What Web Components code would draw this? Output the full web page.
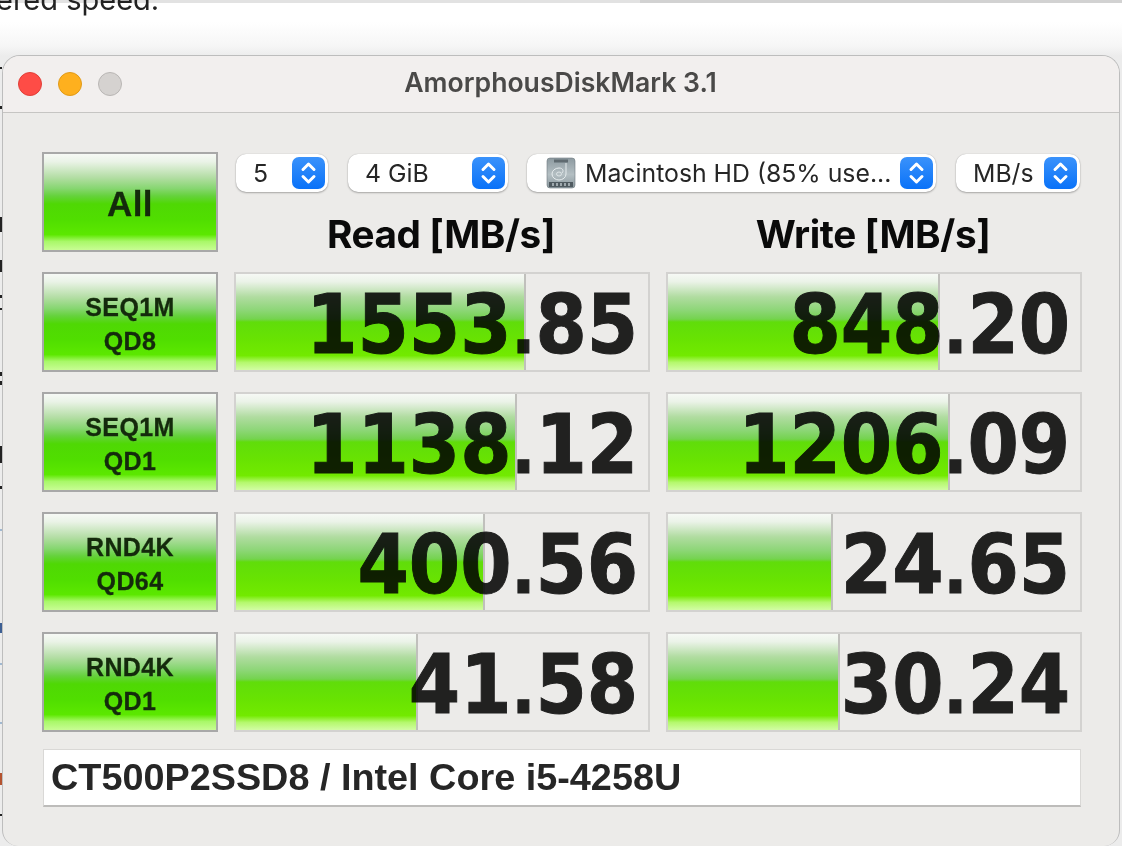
<!DOCTYPE html>
<html>
<head>
<meta charset="utf-8">
<title>AmorphousDiskMark</title>
<style>
  html, body { margin: 0; height: 100%; overflow: hidden; background: #fff; }
</style>
</head>
<body>
<desktop-bg>
  <disk-window>
    <mark-panel></mark-panel>
  </disk-window>
</desktop-bg>

<script>
const GLOSS = `linear-gradient(180deg,
  #f6f9f5 0%, #eaf3e7 8%, #b5dea6 24%, #86d670 36%, #64d23a 44%, #4fd804 52%, #50de00 68%, #5ce800 84%, #a8f868 91%, #c8fc94 100%)`
const GLOSS_BAR = `linear-gradient(180deg,
  #f6f9f5 0%, #ebf3e8 8%, #b0dca0 24%, #8cd676 38%, #74d34e 47%, #60dd0a 50%, #68e302 68%, #72ea00 85%, #b4f86c 92%, #d2fca4 100%)`

class DesktopBg extends HTMLElement {
  constructor() {
    super()
    this.attachShadow({ mode: 'open' })
    this.shadowRoot.innerHTML = `
    <style>
      :host { display: block; position: relative; width: 1122px; height: 846px; overflow: hidden;
        background: linear-gradient(180deg, #fff 0, #fff 22px, #f6f6f6 46px, #ececec 56px);
        font-family: "Inter", "Liberation Sans", sans-serif; color: #222; }
      .strip { position: absolute; left: 0; right: 0; top: 0; height: 3px;
        background: linear-gradient(90deg, #e2e2e2 640px, #d2d2d2 640px); }
      .line { position: absolute; left: -4px; top: -15px; font-size: 29px; line-height: 30px; white-space: nowrap; }
      .bits { position: absolute; left: 0; top: 0; width: 3px; height: 846px; }
      .bits b { position: absolute; left: 0; width: 2px; background: #222; }
    </style>
    <div class="strip"></div>
    <div class="line">ered speed.</div>
    <div class="bits">
      <b style="top:67px;height:2px"></b><b style="top:106px;height:3px"></b>
      <b style="top:217px;height:15px"></b><b style="top:260px;height:12px"></b>
      <b style="top:295px;height:3px"></b><b style="top:308px;height:2px"></b>
      <b style="top:372px;height:4px"></b><b style="top:381px;height:4px"></b>
      <b style="top:446px;height:17px"></b><b style="top:486px;height:3px"></b>
      <b style="top:529px;height:2px;background:#a0b8d0"></b>
      <b style="top:623px;height:10px;background:#3d5f93"></b>
      <b style="top:663px;height:2px;background:#a0b8d0"></b>
      <b style="top:722px;height:2px;background:#a0b8d0"></b>
      <b style="top:773px;height:12px;background:#b4532f"></b>
      <b style="top:814px;height:2px"></b>
    </div>
    <slot></slot>`
  }
}

class DiskWindow extends HTMLElement {
  constructor() {
    super()
    this.attachShadow({ mode: 'open' })
    this.shadowRoot.innerHTML = `
    <style>
      /* sits on the desktop, runs off the bottom right of the shot */
      :host { display: flex; flex-direction: column; position: absolute; left: 2px; top: 55px; width: 1118px; height: 791px;
        background: #ecebe9; border: 1px solid #bdbdbd; border-bottom: 0; border-radius: 18px 18px 16px 16px;
        box-sizing: border-box; overflow: hidden; }
      .bar { flex: none; display: flex; align-items: center; position: relative; height: 57px; box-sizing: border-box;
        padding-left: 15px; gap: 16px; background: #f2efee; border-bottom: 1px solid #c6c5c3; }
      .dot { width: 24px; height: 24px; border-radius: 50%; box-sizing: border-box; }
      .r { background: #fe4c46; border: 1px solid #e03f38; }
      .y { background: #feb01e; border: 1px solid #e09a18; }
      .g { background: #d5d2d0; border: 1px solid #b9b6b4; }
      .title { position: absolute; left: 0; right: 0; top: 10px; text-align: center; padding-right: 1px;
        font: 600 26.600px "Inter", "Liberation Sans", sans-serif; color: #4a4948; pointer-events: none; }
    </style>
    <div class="bar">
      <span class="dot r"></span><span class="dot y"></span><span class="dot g"></span>
      <div class="title">AmorphousDiskMark 3.1</div>
    </div>
    <slot></slot>`
  }
}

class MarkButton extends HTMLElement {
  constructor() {
    super()
    this.attachShadow({ mode: 'open' })
    this.shadowRoot.innerHTML = `
    <style>
      :host { display: flex; flex-direction: column; align-items: center; justify-content: center; box-sizing: border-box;
        height: 100px; padding-top: 3px; border: 2px solid #a8a8a8; background: ${GLOSS}; color: #142a0c;
        font: 700 25px/34px "Liberation Sans", sans-serif; text-align: center; letter-spacing: .4px; -webkit-text-stroke: .3px #142a0c; }
      :host([big]) { font-size: 35px; }
    </style>
    <slot></slot>`
  }
}

class MarkValue extends HTMLElement {
  static get observedAttributes() { return ['fill'] }
  constructor() {
    super()
    this.attachShadow({ mode: 'open' })
    this.shadowRoot.innerHTML = `
    <style>
      :host { display: block; position: relative; box-sizing: border-box; height: 100px; border: 2px solid #d3d2d0; background: #ecebe9; overflow: hidden; }
      .fill { position: absolute; left: 0; top: 0; bottom: 0; background: ${GLOSS_BAR}; border-right: 2px solid #c0c0bc; box-sizing: content-box; }
      .num { position: relative; display: flex; align-items: center; justify-content: flex-end; height: 100%; box-sizing: border-box; padding: 10px 11px 0 0;
        font: 700 82px/86px "DejaVu Sans", sans-serif; color: #232323; mix-blend-mode: multiply; -webkit-text-stroke: 1px #232323;
        transform: scaleX(.9); transform-origin: right center; white-space: nowrap; }
    </style>
    <div class="fill"></div>
    <div class="num"><div><slot></slot></div></div>`
  }
  attributeChangedCallback() {
    this.shadowRoot.querySelector('.fill').style.width = this.getAttribute('fill') + 'px'
  }
}

class MacSelect extends HTMLElement {
  constructor() {
    super()
    this.attachShadow({ mode: 'open' })
    this.shadowRoot.innerHTML = `
    <style>
      :host { display: flex; align-items: center; box-sizing: border-box; height: 38px; background: #fff; border-radius: 10px;
        box-shadow: 0 0 1px rgba(0,0,0,.25), 0 1px 2px rgba(0,0,0,.28);
        padding: 0 3px 0 17px; font: 400 24.800px "Inter", "Liberation Sans", sans-serif; color: #262626; white-space: nowrap; }
      .txt { flex: 1; display: flex; align-items: center; min-width: 0; margin-top: -1px; }
      .stepper { flex: none; width: 33px; height: 32px; border-radius: 7px; background: linear-gradient(180deg, #3a92fb, #0a72f8); }
      svg { display: block; }
    </style>
    <div class="txt"><slot></slot></div>
    <div class="stepper">
      <svg width="33" height="32" viewBox="0 0 33 32" fill="none" stroke="#fff" stroke-width="3" stroke-linecap="round" stroke-linejoin="round">
        <path d="M11 12.500 16.500 7l5.500 5.500M11 19.500l5.500 5.500 5.500-5.500"/>
      </svg>
    </div>`
  }
}

class MarkPanel extends HTMLElement {
  constructor() {
    super()
    this.attachShadow({ mode: 'open' })
    const num = v => v.replace('.', '<span class="pt">.</span>')
    const row = (a, b, v1, f1, v2, f2) => `
      <mark-button><span>${a}</span><span>${b}</span></mark-button>
      <mark-value fill="${f1}">${num(v1)}</mark-value>
      <mark-value fill="${f2}">${num(v2)}</mark-value>`
    this.shadowRoot.innerHTML = `
    <style>
      :host { display: block; padding: 39px 38px 0 39px; }
      .grid { display: grid; grid-template-columns: 176px 416px 416px; column-gap: 16px; row-gap: 20px; grid-auto-rows: 100px; }
      .top { grid-column: 2 / 4; display: flex; flex-direction: column; }
      .selects { display: flex; margin-top: 2px; padding-left: 2px; }
      .heads { display: grid; grid-template-columns: 416px 416px; column-gap: 16px; margin-top: 19px;
        font: 700 38.700px/46px "Inter", "Liberation Sans", sans-serif; color: #0a0a0a; text-align: center; letter-spacing: -.4px; }
      .heads div { padding-right: 2px; }
      .foot { display: flex; align-items: center; box-sizing: border-box; height: 58px; margin: 17px 0 0 1px; width: 1038px; padding-left: 7px;
        background: #fff; border: 1px solid #d9d8d6; border-bottom: 2px solid #bdbcba;
        font: 700 37.800px "Liberation Sans", sans-serif; color: #262626; }
      .pt { font-size: .85em; }
      .s5 { width: 92px; margin-right: 20px; }
      .s4 { width: 160px; margin-right: 19px; }
      .sd { width: 409px; margin-right: 20px; padding-left: 19px; }
      .sm { width: 124px; }
      .hd { flex: none; margin-right: 9px; }
    </style>
    <div class="grid">
      <mark-button big>All</mark-button>
      <div class="top">
        <div class="selects">
          <mac-select class="s5">5</mac-select>
          <mac-select class="s4">4 GiB</mac-select>
          <mac-select class="sd">
            <svg class="hd" width="30" height="32" viewBox="0 0 30 32">
              <defs><linearGradient id="disk" x1="0" y1="0" x2="0" y2="1"><stop offset="0" stop-color="#8d9aa0"/><stop offset=".55" stop-color="#b4bfc3"/><stop offset="1" stop-color="#8a979d"/></linearGradient></defs>
              <rect x="1" y="1" width="28" height="30" rx="3" fill="url(#disk)" stroke="#6f7b80" stroke-width=".6"/>
              <rect x="8" y="2.500" width="14" height="3" fill="#5f6a70"/>
              <path d="M20 6v11a7 6 0 1 1-7-6c4 0 5 3 3 5" fill="none" stroke="#e6ecee" stroke-width="1"/>
              <ellipse cx="13" cy="17" rx="2.500" ry="2" fill="none" stroke="#e6ecee" stroke-width=".8"/>
              <rect x="3" y="25" width="24" height="5" fill="#4f5a60"/>
              <path d="M7 26v3M11 26v3M15 26v3M19 26v3M23 26v3" stroke="#b9c3c7" stroke-width="1.500"/>
            </svg>Macintosh HD (85% use...</mac-select>
          <mac-select class="sm">MB/s</mac-select>
        </div>
        <div class="heads"><div>Read [MB/s]</div><div>Write [MB/s]</div></div>
      </div>
      ${row('SEQ1M', 'QD8', '1553.85', 288, '848.20', 270)}
      ${row('SEQ1M', 'QD1', '1138.12', 279, '1206.09', 280)}
      ${row('RND4K', 'QD64', '400.56', 247, '24.65', 163)}
      ${row('RND4K', 'QD1', '41.58', 180, '30.24', 170)}
    </div>
    <div class="foot">CT500P2SSD8 / Intel Core i5-4258U</div>`
  }
}

customElements.define('desktop-bg', DesktopBg)
customElements.define('disk-window', DiskWindow)
customElements.define('mark-button', MarkButton)
customElements.define('mark-value', MarkValue)
customElements.define('mac-select', MacSelect)
customElements.define('mark-panel', MarkPanel)
</script>
</body>
</html>
